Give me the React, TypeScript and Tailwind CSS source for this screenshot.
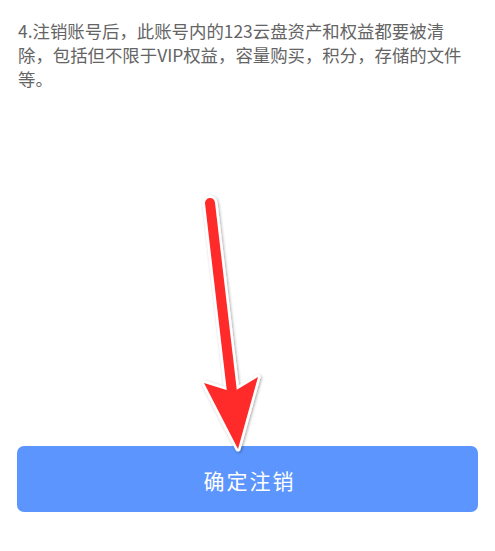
import React from 'react';

const Arrow: React.FC = () => (
  <svg
    className="absolute left-0 top-0 pointer-events-none"
    width={495}
    height={551}
    viewBox="0 0 495 551"
  >
    <defs>
      <filter id="sh" x="-20%" y="-20%" width="140%" height="140%">
        <feDropShadow dx="1" dy="1" stdDeviation="1.5" floodColor="#000" floodOpacity="0.35" />
      </filter>
    </defs>
    <g filter="url(#sh)">
      {/* white outline */}
      <line x1={210} y1={203} x2={232} y2={392} stroke="#fff" strokeWidth={15} strokeLinecap="round" />
      <polygon points="204,383 238,449 258,377 233,392" fill="#fff" stroke="#fff" strokeWidth={5} strokeLinejoin="round" />
      {/* red fill */}
      <line x1={210} y1={203} x2={232} y2={392} stroke="#ff2a2a" strokeWidth={10} strokeLinecap="round" />
      <polygon points="204,383 238,449 258,377 233,392" fill="#ff2a2a" />
    </g>
  </svg>
);

const App: React.FC = () => {
  return (
    <div
      className="relative h-[551px] w-full bg-white flex flex-col overflow-hidden"
      style={{ fontFamily: '"Noto Sans CJK SC", "Noto Sans", sans-serif' }}
    >
      <p className="px-[18px] pt-[19px] text-[17.4px] leading-[24px] text-[#646464] whitespace-nowrap">
        4.注销账号后，此账号内的123云盘资产和权益都要被清
        <br />
        除，包括但不限于VIP权益，容量购买，积分，存储的文件
        <br />
        等。
      </p>

      <div className="mt-auto mb-[39px] mx-[17px]">
        <button className="w-full h-[66px] rounded-[7px] bg-[#5b95fd] text-white text-[21px] tracking-[2px] pt-[3px] pl-[4px] flex items-center justify-center">
          确定注销
        </button>
      </div>

      <Arrow />
    </div>
  );
};

export default App;
